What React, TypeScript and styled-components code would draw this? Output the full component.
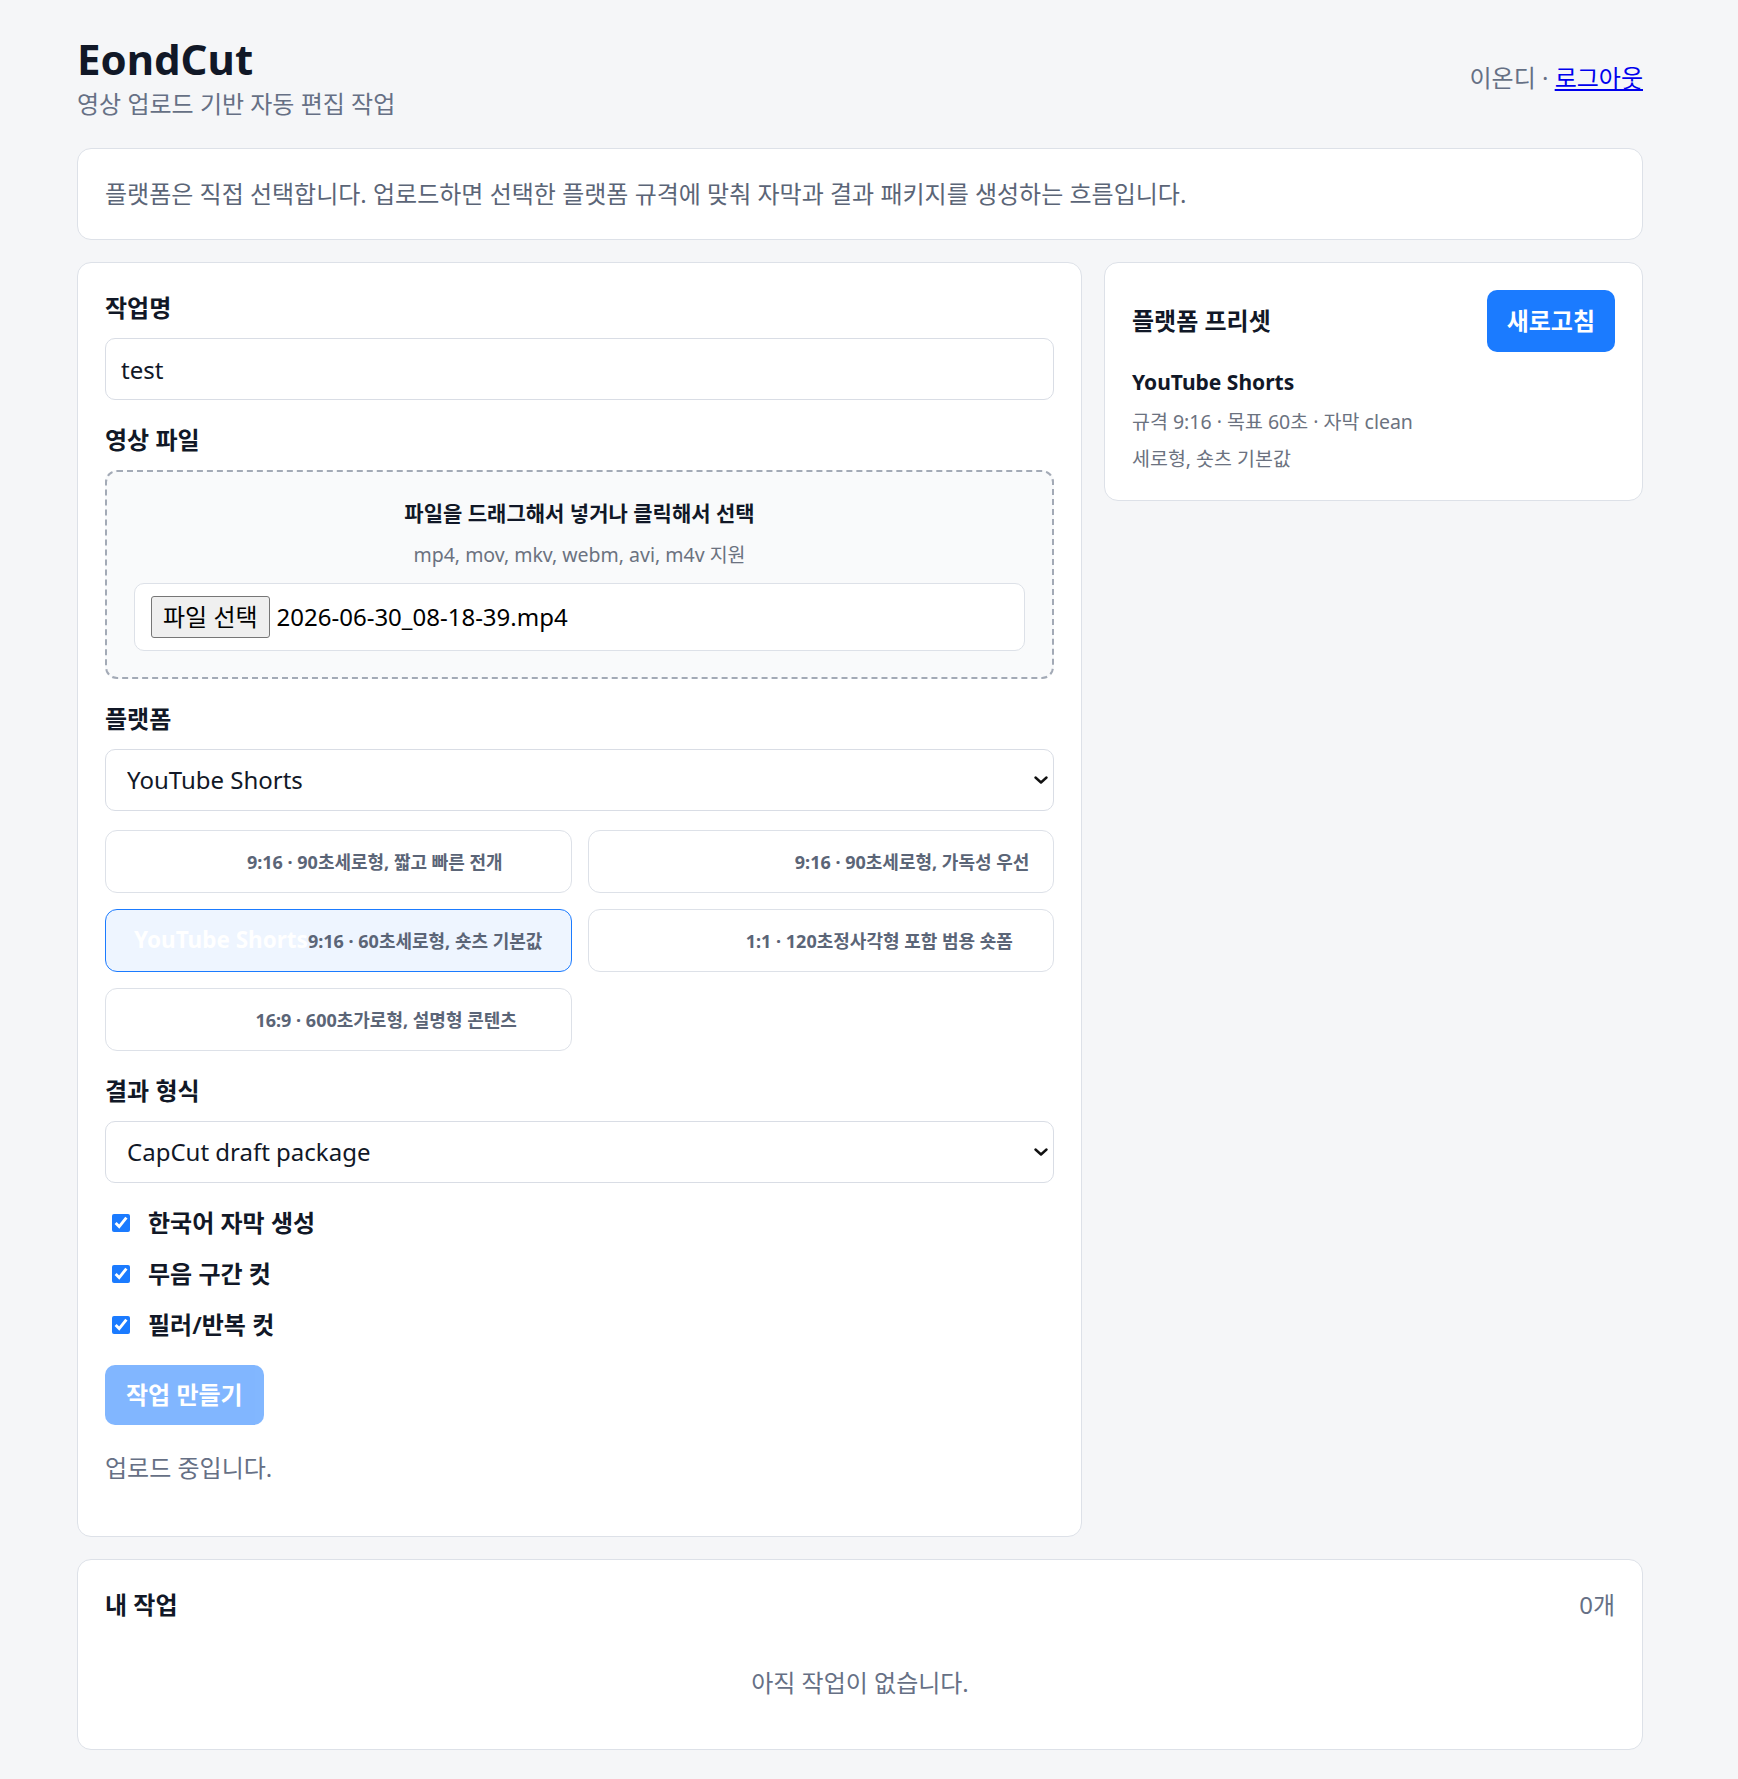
import styled, { createGlobalStyle } from 'styled-components';

const GlobalStyle = createGlobalStyle`
  * {
    box-sizing: border-box;
  }
  body {
    margin: 0;
    background: #f5f6f8;
    color: #111827;
    font-family: 'Noto Sans', 'Noto Sans CJK KR', sans-serif;
    font-size: 24px;
    line-height: 1.5;
  }
`;

const presets = [
  { name: 'TikTok', desc: '9:16 · 90초세로형, 짧고 빠른 전개' },
  { name: 'Instagram Reels', desc: '9:16 · 90초세로형, 가독성 우선' },
  { name: 'YouTube Shorts', desc: '9:16 · 60초세로형, 숏츠 기본값' },
  { name: 'Instagram', desc: '1:1 · 120초정사각형 포함 범용 숏폼' },
  { name: 'YouTube', desc: '16:9 · 600초가로형, 설명형 콘텐츠' },
];

const options = [
  { label: '한국어 자막 생성' },
  { label: '무음 구간 컷' },
  { label: '필러/반복 컷' },
];

const Chevron = () => (
  <ChevronIcon width='14' height='8' viewBox='0 0 14 8' fill='none'>
    <path d='M1.5 1.5 7 6.5l5.5-5' stroke='#111' strokeWidth='2.4' strokeLinecap='round' strokeLinejoin='round' />
  </ChevronIcon>
);

const App = () => {
  const selected = 'YouTube Shorts';

  return (
    <Page>
      <GlobalStyle />
      <Header>
        <Brand>
          <Title>EondCut</Title>
          <Subtitle>영상 업로드 기반 자동 편집 작업</Subtitle>
        </Brand>
        <UserBox>
          이온디 · <a href='#'>로그아웃</a>
        </UserBox>
      </Header>

      <Stack>
        <Card>
          <Notice>
            플랫폼은 직접 선택합니다. 업로드하면 선택한 플랫폼 규격에 맞춰 자막과 결과 패키지를 생성하는 흐름입니다.
          </Notice>
        </Card>

        <Columns>
          <Card>
            <Form>
              <Field>
                <Label>작업명</Label>
                <TextInput defaultValue='test' />
              </Field>

              <Field>
                <Label>영상 파일</Label>
                <DropZone>
                  <DropTitle>파일을 드래그해서 넣거나 클릭해서 선택</DropTitle>
                  <DropHint>mp4, mov, mkv, webm, avi, m4v 지원</DropHint>
                  <FileBox>
                    <FileButton type='button'>파일 선택</FileButton>
                    <FileName>2026-06-30_08-18-39.mp4</FileName>
                  </FileBox>
                </DropZone>
              </Field>

              <Field>
                <Label>플랫폼</Label>
                <SelectWrap>
                  <Select defaultValue='youtube_shorts'>
                    <option value='tiktok'>TikTok</option>
                    <option value='instagram_reels'>Instagram Reels</option>
                    <option value='youtube_shorts'>YouTube Shorts</option>
                    <option value='instagram'>Instagram</option>
                    <option value='youtube'>YouTube</option>
                  </Select>
                  <Chevron />
                </SelectWrap>
                <PresetGrid>
                  {presets.map((p) => (
                    <PresetButton key={p.name} type='button' $active={p.name === selected}>
                      <PresetName>{p.name}</PresetName>
                      <PresetDesc>{p.desc}</PresetDesc>
                    </PresetButton>
                  ))}
                </PresetGrid>
              </Field>

              <Field>
                <Label>결과 형식</Label>
                <SelectWrap>
                  <Select defaultValue='capcut'>
                    <option value='capcut'>CapCut draft package</option>
                    <option value='mp4'>MP4</option>
                  </Select>
                  <Chevron />
                </SelectWrap>
              </Field>

              <CheckList>
                {options.map((o) => (
                  <CheckRow key={o.label}>
                    <CheckBox type='checkbox' defaultChecked />
                    {o.label}
                  </CheckRow>
                ))}
              </CheckList>

              <div>
                <SubmitButton type='button' disabled>
                  작업 만들기
                </SubmitButton>
              </div>

              <Status>업로드 중입니다.</Status>
            </Form>
          </Card>

          <Card>
            <SideHeader>
              <CardTitle>플랫폼 프리셋</CardTitle>
              <RefreshButton type='button'>새로고침</RefreshButton>
            </SideHeader>
            <PresetInfoName>YouTube Shorts</PresetInfoName>
            <Meta>규격 9:16 · 목표 60초 · 자막 clean</Meta>
            <Meta>세로형, 숏츠 기본값</Meta>
          </Card>
        </Columns>

        <Card>
          <JobsHeader>
            <CardTitle>내 작업</CardTitle>
            <Count>0개</Count>
          </JobsHeader>
          <Empty>아직 작업이 없습니다.</Empty>
        </Card>
      </Stack>
    </Page>
  );
};

export default App;

const Page = styled.div`
  padding: 34px 95px 28px 77px;
`;

const Header = styled.header`
  display: flex;
  justify-content: space-between;
  align-items: center;
  margin-bottom: 26px;
`;

const Brand = styled.div`
  display: flex;
  flex-direction: column;
`;

const Title = styled.h1`
  margin: 0;
  font-size: 42px;
  line-height: 1.2;
  font-weight: 700;
  color: #111827;
`;

const Subtitle = styled.p`
  margin: 2px 0 0;
  color: #667085;
`;

const UserBox = styled.div`
  color: #667085;

  a {
    color: #0000ee;
  }
`;

const Stack = styled.div`
  display: flex;
  flex-direction: column;
  gap: 22px;
`;

const Card = styled.section`
  background: #ffffff;
  border: 1px solid #dde1e8;
  border-radius: 14px;
  padding: 27px;
`;

const Notice = styled.p`
  margin: 0;
  color: #5b6577;
`;

const Columns = styled.div`
  display: grid;
  grid-template-columns: minmax(0, 1fr) 539px;
  gap: 22px;
  align-items: start;
`;

const Form = styled.div`
  display: flex;
  flex-direction: column;
  gap: 22px;
`;

const Field = styled.div`
  display: flex;
  flex-direction: column;
`;

const Label = styled.label`
  font-weight: 700;
  margin-bottom: 12px;
`;

const TextInput = styled.input`
  height: 62px;
  padding: 0 15px;
  border: 1px solid #d9dde5;
  border-radius: 10px;
  background: #fff;
  font: inherit;
  font-size: 24px;
  color: #111827;
`;

const SelectWrap = styled.div`
  position: relative;
  display: flex;
`;

const Select = styled.select`
  flex: 1;
  height: 62px;
  padding: 0 40px 0 21px;
  border: 1px solid #d9dde5;
  border-radius: 10px;
  background: #fff;
  font: inherit;
  font-size: 24px;
  color: #111827;
  appearance: none;
`;

const ChevronIcon = styled.svg`
  position: absolute;
  right: 6px;
  top: 50%;
  transform: translateY(-50%);
  pointer-events: none;
`;

const DropZone = styled.div`
  border: 2px dashed #a3aab6;
  border-radius: 12px;
  background: #f9fafb;
  padding: 26px 27px;
  display: flex;
  flex-direction: column;
  align-items: stretch;
  text-align: center;
`;

const DropTitle = styled.div`
  font-size: 21px;
  font-weight: 700;
`;

const DropHint = styled.div`
  margin-top: 10px;
  font-size: 19.5px;
  color: #6b7280;
`;

const FileBox = styled.div`
  margin-top: 14px;
  height: 68px;
  display: flex;
  align-items: center;
  gap: 7px;
  padding: 0 16px;
  background: #fff;
  border: 1px solid #dde1e8;
  border-radius: 10px;
  text-align: left;
`;

const FileButton = styled.button`
  height: 42px;
  padding: 0 11px;
  font: inherit;
  font-size: 24px;
  line-height: 1;
  color: #000;
  background: #efefef;
  border: 1px solid #767676;
  border-radius: 3px;
`;

const FileName = styled.span`
  font-size: 24px;
  color: #000;
`;

const PresetGrid = styled.div`
  margin-top: 19px;
  display: grid;
  grid-template-columns: 1fr 1fr;
  gap: 16px;
`;

const PresetButton = styled.button<{ $active?: boolean }>`
  height: 63px;
  padding: 0 16px;
  border: 1px solid ${(p) => (p.$active ? '#1b7bff' : '#dde1e8')};
  background: ${(p) => (p.$active ? '#eef5ff' : '#ffffff')};
  border-radius: 12px;
  font-family: inherit;
  font-size: 22.5px;
  line-height: 35px;
  text-align: center;
  white-space: nowrap;
  overflow: hidden;
`;

const PresetName = styled.strong`
  color: #ffffff;
  font-weight: 700;
`;

const PresetDesc = styled.span`
  color: #5b6577;
  font-size: 18px;
  font-weight: 700;
`;

const CheckList = styled.div`
  display: flex;
  flex-direction: column;
  gap: 15px;
`;

const CheckRow = styled.label`
  display: flex;
  align-items: center;
  gap: 18px;
  font-weight: 600;
`;

const CheckBox = styled.input`
  width: 18px;
  height: 18px;
  margin: 0 0 0 7px;
  accent-color: #1b7bff;
`;

const SubmitButton = styled.button`
  height: 60px;
  padding: 0 21px;
  border: none;
  border-radius: 10px;
  background: #1b7bff;
  color: #fff;
  font: inherit;
  font-weight: 700;

  &:disabled {
    opacity: 0.55;
  }
`;

const Status = styled.p`
  margin: 3px 0 23px;
  color: #667085;
`;

const SideHeader = styled.div`
  display: flex;
  justify-content: space-between;
  align-items: center;
`;

const CardTitle = styled.h2`
  margin: 0;
  font-size: 24px;
  font-weight: 700;
`;

const RefreshButton = styled.button`
  height: 62px;
  padding: 0 20px;
  border: none;
  border-radius: 10px;
  background: #1b7bff;
  color: #fff;
  font: inherit;
  font-weight: 700;
`;

const PresetInfoName = styled.div`
  margin-top: 15px;
  font-size: 21px;
  font-weight: 700;
`;

const Meta = styled.p`
  margin: 8px 0 0;
  font-size: 19.5px;
  color: #6b7280;
`;

const JobsHeader = styled.div`
  display: flex;
  justify-content: space-between;
  align-items: center;
`;

const Count = styled.span`
  color: #667085;
`;

const Empty = styled.p`
  margin: 21px 0 0;
  padding: 21px 0;
  text-align: center;
  color: #667085;
`;
